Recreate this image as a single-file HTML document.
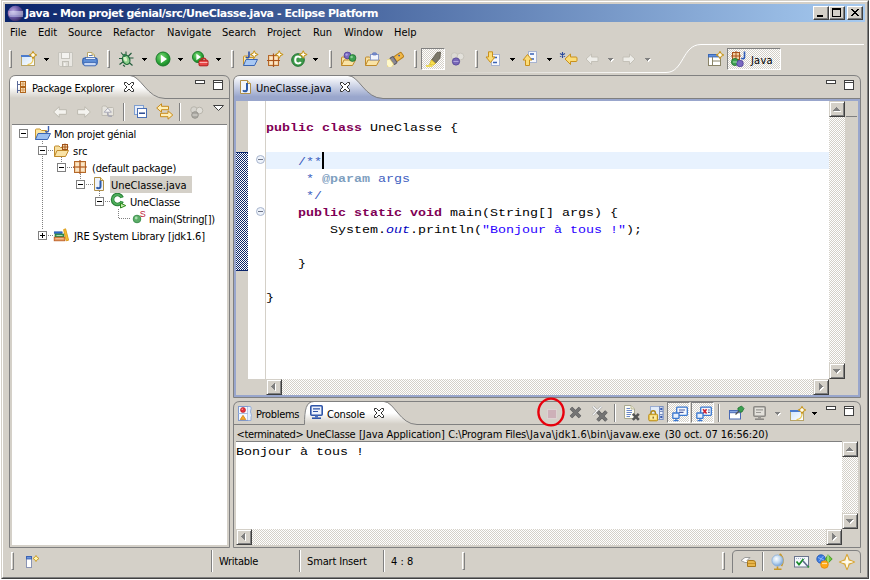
<!DOCTYPE html>
<html><head><meta charset="utf-8"><title>Java - Mon projet génial/src/UneClasse.java - Eclipse Platform</title>
<style>
*{box-sizing:border-box;margin:0;padding:0}
html,body{width:870px;height:580px;overflow:hidden;background:#fff}
body{position:relative;font-family:"DejaVu Sans Condensed","Liberation Sans",sans-serif;font-size:11px;color:#000}
div,span,i,svg,b{position:absolute;display:block}
b{font-weight:normal}
.t{white-space:nowrap;line-height:14px;height:14px}
#win{left:1px;top:0;width:868px;height:579px;background:#d4d0c8;border:1px solid;border-color:#d4d0c8 #404040 #404040 #d4d0c8}
#win2{left:2px;top:1px;width:866px;height:577px;border:1px solid;border-color:#fff #808080 #808080 #fff}
#title{left:5px;top:4px;width:860px;height:18px;background:linear-gradient(90deg,#0a246a 0%,#a6caf0 100%)}
#title .tt{left:20px;top:2px;color:#fff;font-weight:bold;font-size:11px;line-height:16px;white-space:nowrap;font-family:"DejaVu Sans","Liberation Sans",sans-serif;letter-spacing:-0.46px}
.cb{top:2px;width:16px;height:14px;background:#d4d0c8;border:1px solid;border-color:#fff #404040 #404040 #fff;box-shadow:inset -1px -1px 0 #808080}
.mono{font-family:"Liberation Mono",monospace;font-size:11px;transform:scaleX(1.2119);transform-origin:0 0;white-space:pre;line-height:17px;height:17px}
.kw{color:#7f0055;font-weight:bold;position:static;display:inline}
.cm{color:#3f5fbf}
.tag{color:#7f9fbf;font-weight:bold;position:static;display:inline}
.str{color:#2a00ff;position:static;display:inline}
.fld{color:#0000c0;font-style:italic;position:static;display:inline}
.sbtn{width:16px;height:16px;background:#d4d0c8;border:1px solid;border-color:#d4d0c8 #404040 #404040 #d4d0c8;box-shadow:inset 1px 1px 0 #fff,inset -1px -1px 0 #808080}
.track{background-color:#fff;background-image:conic-gradient(#d4d0c8 25%,#fff 0 50%,#d4d0c8 0 75%,#fff 0);background-size:2px 2px}
.chk{background-color:#fff;background-image:conic-gradient(#d4d0c8 25%,#fff 0 50%,#d4d0c8 0 75%,#fff 0);background-size:2px 2px;border:1px solid;border-color:#808080 #fff #fff #808080}
.sep{width:2px;border-left:1px solid #808080;border-right:1px solid #fff}
.grip{width:3px;border:1px solid;border-color:#fff #808080 #808080 #fff}
.vsep{width:1px;background:#808080}
.dd{width:0;height:0;border:3px solid transparent;border-top-color:#000;border-bottom:0;border-left-width:3px;border-right-width:3px}
</style></head><body>
<div id="win"></div><div id="win2"></div>
<div id="title">
<svg style="left:2px;top:1px" width="17" height="17" viewBox="-0.5 -0.5 17 17"><defs><radialGradient id="eg" cx="35%" cy="35%" r="75%"><stop offset="0" stop-color="#b9a9e0"/><stop offset="0.5" stop-color="#6a5aa8"/><stop offset="1" stop-color="#2c2255"/></radialGradient></defs><circle cx="8" cy="8" r="7.8" fill="url(#eg)"/><path d="M1.5 5.5Q1 8 1.8 10.6" stroke="#e8a0c8" stroke-width="1" fill="none" opacity=".7"/><rect x="2" y="6" width="13.5" height="1" fill="#e8eefc"/><rect x="1.6" y="8" width="14" height="1" fill="#e8eefc"/><rect x="2" y="10" width="13.5" height="1" fill="#c8cdf0"/></svg>
<span class="tt">Java - Mon projet génial/src/UneClasse.java - Eclipse Platform</span>
<div class="cb" style="left:808px"><i style="left:3px;top:8px;width:6px;height:2px;background:#000"></i></div>
<div class="cb" style="left:824px"><i style="left:2px;top:1px;width:9px;height:9px;border:1px solid #000;border-top-width:2px"></i></div>
<div class="cb" style="left:842px"><svg style="left:3px;top:2px" width="8" height="7" viewBox="0 0 8 7"><path d="M0 0L7 7M1 0L8 7M7 0L0 7M8 0L1 7" stroke="#000" stroke-width="1" shape-rendering="crispEdges"/></svg></div>
</div>
<span class="t" style="left:10px;top:26px">File</span><span class="t" style="left:38px;top:26px">Edit</span><span class="t" style="left:68px;top:26px">Source</span><span class="t" style="left:113px;top:26px">Refactor</span><span class="t" style="left:167px;top:26px">Navigate</span><span class="t" style="left:222px;top:26px">Search</span><span class="t" style="left:267px;top:26px">Project</span><span class="t" style="left:313px;top:26px">Run</span><span class="t" style="left:344px;top:26px">Window</span><span class="t" style="left:394px;top:26px">Help</span>
<!-- Main toolbar -->
<svg style="left:0;top:40px" width="870" height="36" viewBox="0 40 870 36" fill="none"><defs><linearGradient id="cl" x1="0" y1="0" x2="1" y2="0"><stop offset="0" stop-color="#fff" stop-opacity="0"/><stop offset="1" stop-color="#fff"/></linearGradient></defs><rect x="440" y="72" width="226" height="1" fill="url(#cl)"/><path d="M666 72.5C684 72.5 682 44.5 701 44.5H864" stroke="#fff"/></svg><div class="grip" style="left:9px;top:50px;height:18px"></div><svg style="left:20px;top:50px" width="17" height="17" viewBox="0 0 17 17" ><defs><linearGradient id="nw20" x1="0" y1="0" x2="1" y2="1"><stop offset="0" stop-color="#cfe4fb"/><stop offset="1" stop-color="#fff"/></linearGradient></defs><rect x="1.5" y="5.5" width="13" height="10" fill="url(#nw20)" stroke="#b8a468"/><path d="M1 5.5H11M1 6.5H11" stroke="#4a7acc"/><path d="M13 8V9Q13 14 7.5 14.6" fill="none" stroke="#ecc850" stroke-width="1.2"/><path d="M13 1.4l1.2 2.4l2.4 1.2l-2.4 1.2l-1.2 2.4l-1.2-2.4l-2.4-1.2l2.4-1.2z" fill="#fffbe0" stroke="#c8961e" stroke-width="1.1" stroke-linejoin="round"/><path d="M13 3v4M11 5h4" stroke="#fff" stroke-width=".8"/></svg><svg style="left:44px;top:58px" width="5" height="3" viewBox="0 0 5 3" shape-rendering="crispEdges"><path d="M0 0H5V1H0ZM1 1H4V2H1ZM2 2H3V3H2Z" fill="#000"/></svg><svg style="left:58px;top:52px" width="16" height="15" viewBox="0 0 16 15" ><path d="M0.5 0.5H14.5V14.5H2L0.5 13Z" fill="#e9e7e2" stroke="#c6c4bd"/><rect x="3.5" y="0.5" width="8" height="6" fill="#f4f3f0" stroke="#c6c4bd"/><rect x="4.5" y="9.5" width="6" height="5" fill="#dedcd6" stroke="#c0beb6"/><rect x="6" y="11" width="1.5" height="3" fill="#f4f3f0"/></svg><svg style="left:82px;top:51px" width="16" height="16" viewBox="0 0 16 16" ><path d="M5.5 8V1.5H10L12.5 4V8" fill="#fdfdf6" stroke="#b8a468"/><path d="M10 1.5V4H12.5" fill="#f0e0a8" stroke="#b8a468" stroke-width=".8"/><path d="M7 4.5H10.5M7 6.5H11" stroke="#5a76b0"/><rect x="0.8" y="7.2" width="14.4" height="6.6" rx="1.8" fill="#5f8fd8" stroke="#2f5fb0" stroke-width="1.2"/><rect x="3.5" y="6.4" width="10" height="2" fill="#e4ecf8" stroke="#3a64b0" stroke-width=".7"/><rect x="1.8" y="11.4" width="12.4" height="3.4" rx="1.2" fill="#c8d8f4" stroke="#3a64b0" stroke-width=".9"/></svg><div class="grip" style="left:107px;top:50px;height:18px"></div><svg style="left:118px;top:51px" width="17" height="17" viewBox="0 0 17 17" ><path d="M3 1.5L6 5M13.5 2L10 5.5M1 7.5H5M11 7H15.5M1.5 13.5L5.5 10.5M10.5 11L14.5 14.5M8 0.5V4M5 14L7 15.5" stroke="#1f5a3a" stroke-width="1.1" fill="none"/><ellipse cx="8.2" cy="8.8" rx="3.6" ry="4.8" transform="rotate(-20 8.2 8.8)" fill="#8ccf8a" stroke="#1f6a3a" stroke-width="1.2"/><ellipse cx="7.4" cy="8" rx="1.6" ry="2.6" transform="rotate(-20 7.4 8)" fill="#d8f0c8"/><circle cx="6.4" cy="4.4" r="1.6" fill="#2f7a4a"/></svg><svg style="left:142px;top:58px" width="5" height="3" viewBox="0 0 5 3" shape-rendering="crispEdges"><path d="M0 0H5V1H0ZM1 1H4V2H1ZM2 2H3V3H2Z" fill="#000"/></svg><svg style="left:155px;top:51px" width="16" height="16" viewBox="0 0 16 16" ><defs><radialGradient id="rga" cx="40%" cy="35%" r="70%"><stop offset="0" stop-color="#7fd878"/><stop offset=".6" stop-color="#2fa83a"/><stop offset="1" stop-color="#158024"/></radialGradient></defs><circle cx="8" cy="8" r="7" fill="url(#rga)" stroke="#1a7a2a" stroke-width="1"/><path d="M5.8 3.8V12.2L12 8Z" fill="#fff"/></svg><svg style="left:178px;top:58px" width="5" height="3" viewBox="0 0 5 3" shape-rendering="crispEdges"><path d="M0 0H5V1H0ZM1 1H4V2H1ZM2 2H3V3H2Z" fill="#000"/></svg><svg style="left:192px;top:51px" width="17" height="16" viewBox="0 0 17 16" ><defs><radialGradient id="rgb" cx="40%" cy="35%" r="70%"><stop offset="0" stop-color="#7fd878"/><stop offset=".6" stop-color="#2fa83a"/><stop offset="1" stop-color="#158024"/></radialGradient></defs><circle cx="6" cy="6" r="5.5" fill="url(#rgb)" stroke="#1a7a2a" stroke-width="1"/><path d="M4.4 2.8V9.2L9 6Z" fill="#fff"/><path d="M9 9.5Q9 7.2 11.5 7.2Q14 7.2 14 9.5" fill="none" stroke="#c82828" stroke-width="1.2"/><rect x="7" y="9.2" width="9" height="5.6" rx="1" fill="#e84848" stroke="#b01818"/><path d="M7.5 11.5H15.5" stroke="#f8b0b0"/></svg><svg style="left:216px;top:58px" width="5" height="3" viewBox="0 0 5 3" shape-rendering="crispEdges"><path d="M0 0H5V1H0ZM1 1H4V2H1ZM2 2H3V3H2Z" fill="#000"/></svg><div class="grip" style="left:231px;top:50px;height:18px"></div><svg style="left:242px;top:50px" width="17" height="17" viewBox="0 0 17 17" ><path d="M1.5 15.5V7Q1.5 6 2.5 6H6L7.5 7.5H11.5V9" fill="#fbe6a2" stroke="#c9962e"/><path d="M1.5 15.5L4 9.5H15.5L12.5 15.5Z" fill="#a8c8f4" stroke="#3a66b4" stroke-linejoin="round"/><path d="M7 1.5V6Q7 7.8 5.4 7.8Q4.4 7.8 4 6.8" fill="none" stroke="#2c50a8" stroke-width="1.6"/><path d="M12.2 0.9l1.2 2.4l2.4 1.2l-2.4 1.2l-1.2 2.4l-1.2-2.4l-2.4-1.2l2.4-1.2z" fill="#fffbe0" stroke="#c8961e" stroke-width="1.1" stroke-linejoin="round"/><path d="M12.2 2.5v4M10.2 4.5h4" stroke="#fff" stroke-width=".8"/></svg><svg style="left:267px;top:50px" width="17" height="17" viewBox="0 0 17 17" ><rect x="1.5" y="5.5" width="10" height="10" fill="#f3cfa0" stroke="#b4682a"/><path d="M6.5 3.5V17M0 10.5H13" stroke="#a9531c" stroke-width="1.2"/><rect x="3" y="7" width="2.6" height="2.6" fill="#fae6c8"/><rect x="7.6" y="7" width="2.6" height="2.6" fill="#fae6c8"/><rect x="3" y="11.6" width="2.6" height="2.6" fill="#fae6c8"/><rect x="7.6" y="11.6" width="2.6" height="2.6" fill="#fae6c8"/><path d="M12.2 0.9l1.2 2.4l2.4 1.2l-2.4 1.2l-1.2 2.4l-1.2-2.4l-2.4-1.2l2.4-1.2z" fill="#fffbe0" stroke="#c8961e" stroke-width="1.1" stroke-linejoin="round"/><path d="M12.2 2.5v4M10.2 4.5h4" stroke="#fff" stroke-width=".8"/></svg><svg style="left:291px;top:50px" width="17" height="17" viewBox="0 0 17 17" ><circle cx="7" cy="10" r="6.3" fill="#3d9a4a" stroke="#1f7030"/><path d="M9.8 8Q9 6.6 7 6.6Q4.2 6.6 4.2 10Q4.2 13.4 7 13.4Q9 13.4 9.8 12" fill="none" stroke="#fff" stroke-width="2"/><path d="M12.2 0.9l1.2 2.4l2.4 1.2l-2.4 1.2l-1.2 2.4l-1.2-2.4l-2.4-1.2l2.4-1.2z" fill="#fffbe0" stroke="#c8961e" stroke-width="1.1" stroke-linejoin="round"/><path d="M12.2 2.5v4M10.2 4.5h4" stroke="#fff" stroke-width=".8"/></svg><svg style="left:313px;top:58px" width="5" height="3" viewBox="0 0 5 3" shape-rendering="crispEdges"><path d="M0 0H5V1H0ZM1 1H4V2H1ZM2 2H3V3H2Z" fill="#000"/></svg><div class="grip" style="left:329px;top:50px;height:18px"></div><svg style="left:340px;top:51px" width="18" height="16" viewBox="0 0 18 16" ><path d="M1.5 14.5V7Q1.5 6 2.5 6H5.5L7 7.5H11.5V9" fill="#f6dfa0" stroke="#c08a2a"/><path d="M1.5 14.5L4 9H15.5L12.5 14.5Z" fill="#f9e3a6" stroke="#c08a2a" stroke-linejoin="round"/><circle cx="7.5" cy="4.5" r="3.4" fill="#7a6ac0" stroke="#4a3a98" stroke-width=".8"/><circle cx="12.5" cy="7" r="3.4" fill="#3da050" stroke="#1f7030" stroke-width=".8"/><circle cx="6.6" cy="3.6" r="1.2" fill="#b0a4e0"/><circle cx="11.6" cy="6" r="1.2" fill="#8cd098"/></svg><svg style="left:364px;top:51px" width="18" height="16" viewBox="0 0 18 16" ><path d="M1.5 14.5V7Q1.5 6 2.5 6H5.5L7 7.5H11.5V9" fill="#f6dfa0" stroke="#c08a2a"/><path d="M1.5 14.5L4 9H15.5L12.5 14.5Z" fill="#f9e3a6" stroke="#c08a2a" stroke-linejoin="round"/><rect x="6.5" y="3.5" width="8" height="5.5" fill="#f4f6fc" stroke="#8a9ac8"/><rect x="8.5" y="1.8" width="4" height="2.2" rx="1" fill="#7a90d0" stroke="#5a70b8" stroke-width=".7"/></svg><svg style="left:387px;top:51px" width="19" height="16" viewBox="0 0 19 16" ><g transform="rotate(-35 9 8)"><rect x="7" y="5" width="10" height="5.6" rx="1.2" fill="#f0b848" stroke="#b8801c"/><circle cx="13.5" cy="7" r=".9" fill="#3a5aa8"/><rect x="4" y="4" width="4" height="7.6" rx="1" fill="#8a8894" stroke="#5a5864"/><path d="M4 4.5L-2 2.5V13L4 11Z" fill="#fff8c8" stroke="#e8d070" stroke-width=".7"/></g></svg><div class="grip" style="left:414px;top:50px;height:18px"></div><div class="chk" style="left:421px;top:48px;width:24px;height:22px"></div><svg style="left:425px;top:51px" width="17" height="16" viewBox="0 0 17 16" ><path d="M6.5 9L12 1.5L15.5 1L15 7L10.5 12.5Z" fill="#7a7668" stroke="#5a5648" stroke-width=".8"/><path d="M6.5 9L10.5 12.5L8.5 14L4.5 13.5Z" fill="#f8e050" stroke="#d8b820" stroke-width=".8"/><path d="M1 15H7.5" stroke="#f0d838" stroke-width="1.6"/></svg><svg style="left:450px;top:51px" width="15" height="15" viewBox="0 0 15 15" ><circle cx="4.5" cy="5" r="3.4" fill="#dcdad4" stroke="#c8c5bc"/><circle cx="10.5" cy="5.5" r="3.4" fill="#e2e0da" stroke="#c8c5bc"/><circle cx="6" cy="10.5" r="3.6" fill="#7868b8" stroke="#5a4a9c"/><rect x="3.5" y="10" width="5" height="1" fill="#b0a4dc"/></svg><div class="grip" style="left:475px;top:50px;height:18px"></div><svg style="left:485px;top:51px" width="16" height="16" viewBox="0 0 16 16" ><rect x="6.5" y="3.5" width="8" height="11" fill="#f6f8fd" stroke="#a8b4d0"/><path d="M8 6.5h4M8 11.5h4" stroke="#3a62b4" stroke-width="1.4"/><path d="M3.5 0.8H7.5V6H10L5.5 11.5L1 6H3.5Z" fill="#fbdc78" stroke="#c8901c" stroke-linejoin="round"/></svg><svg style="left:510px;top:58px" width="5" height="3" viewBox="0 0 5 3" shape-rendering="crispEdges"><path d="M0 0H5V1H0ZM1 1H4V2H1ZM2 2H3V3H2Z" fill="#000"/></svg><svg style="left:522px;top:50px" width="16" height="17" viewBox="0 0 16 17" ><rect x="6.5" y="1.5" width="8" height="11" fill="#f6f8fd" stroke="#a8b4d0"/><path d="M8 4h4M8 9h4" stroke="#3a62b4" stroke-width="1.4"/><path d="M3.5 15.5H7.5V10H10L5.5 4.5L1 10H3.5Z" fill="#fbdc78" stroke="#c8901c" stroke-linejoin="round"/></svg><svg style="left:547px;top:58px" width="5" height="3" viewBox="0 0 5 3" shape-rendering="crispEdges"><path d="M0 0H5V1H0ZM1 1H4V2H1ZM2 2H3V3H2Z" fill="#000"/></svg><svg style="left:559px;top:51px" width="19" height="16" viewBox="0 0 19 16" ><path d="M6 8L11.5 3V6H17Q18 6 18 7V9.5Q18 10.5 17 10.5H11.5V13.5Z" fill="#fbdc78" stroke="#c8901c" stroke-linejoin="round"/><path d="M3.5 1V7M1 2.5L6 5.5M6 2.5L1 5.5" stroke="#2a4a9c" stroke-width="1.1"/></svg><svg style="left:585px;top:53px" width="14" height="13" viewBox="0 0 14 13" ><path d="M1 6L6.5 1V4H13V8.5H6.5V11.5Z" fill="#eeede9" stroke="#c4c1b8" stroke-linejoin="round"/></svg><svg style="left:608px;top:58px" width="6" height="4" viewBox="0 0 6 4" shape-rendering="crispEdges"><path d="M1 1H6V2H1ZM2 2H5V3H2ZM3 3H4V4H3Z" fill="#fff"/><path d="M0 0H5V1H0ZM1 1H4V2H1ZM2 2H3V3H2Z" fill="#808080"/></svg><svg style="left:622px;top:53px" width="14" height="13" viewBox="0 0 14 13" ><path d="M1 6L6.5 1V4H13V8.5H6.5V11.5Z" fill="#eeede9" stroke="#c4c1b8" stroke-linejoin="round" transform="translate(14 0) scale(-1 1)"/></svg><svg style="left:645px;top:58px" width="6" height="4" viewBox="0 0 6 4" shape-rendering="crispEdges"><path d="M1 1H6V2H1ZM2 2H5V3H2ZM3 3H4V4H3Z" fill="#fff"/><path d="M0 0H5V1H0ZM1 1H4V2H1ZM2 2H3V3H2Z" fill="#808080"/></svg><svg style="left:708px;top:51px" width="16" height="16" viewBox="0 0 16 16" ><rect x="0.5" y="3.5" width="12" height="11" fill="#fff" stroke="#8a8468"/><rect x="0.5" y="3.5" width="12" height="2.4" fill="#5f8fdc" stroke="#3a68b8"/><path d="M4.5 6V14.5M4.5 10H12.5" stroke="#8a8468"/><path d="M12 0.4l1.2 2.4l2.4 1.2l-2.4 1.2l-1.2 2.4l-1.2-2.4l-2.4-1.2l2.4-1.2z" fill="#fffbe0" stroke="#c8961e" stroke-width="1.1" stroke-linejoin="round"/><path d="M12 2v4M10 4h4" stroke="#fff" stroke-width=".8"/></svg><div class="chk" style="left:727px;top:48px;width:54px;height:22px"></div><svg style="left:730px;top:51px" width="18" height="16" viewBox="0 0 18 16" ><rect x="2.5" y="1.5" width="7" height="7" fill="#f3cfa0" stroke="#a9531c"/><path d="M6 0V10M1 5H11" stroke="#a9531c"/><path d="M14.5 0.5V6Q14.5 7.8 12.9 7.8Q11.9 7.8 11.5 6.8" fill="none" stroke="#2c5ab8" stroke-width="1.6"/><circle cx="5" cy="11" r="3.6" fill="#3da050" stroke="#1f7030" stroke-width=".8"/><circle cx="10" cy="12.5" r="3.3" fill="#7a6ac0" stroke="#4a3a98" stroke-width=".8"/><rect x="3" y="10.5" width="4" height="1" fill="#a8e0b0"/></svg><span class="t" style="left:751px;top:54px;letter-spacing:0.2px">Java</span>
<!-- Package Explorer -->
<svg style="left:0;top:0" width="870" height="580" viewBox="0 0 870 580" fill="none"><path d="M9.5 547.5V82Q9.5 75.5 16 75.5H223Q229.5 75.5 229.5 82V547.5Z" stroke="#808080" fill="#d4d0c8"/><defs><linearGradient id="wg" x1="0" y1="0" x2="0" y2="1"><stop offset="0" stop-color="#fff"/><stop offset="0.5" stop-color="#fff"/><stop offset="1" stop-color="#d4d0c8"/></linearGradient></defs><path d="M10 98V82Q10 76 16 76H130C141 76 147 98 165 98Z" fill="url(#wg)"/><path d="M130 75.5C141 75.5 147 98.5 165 98.5H229" stroke="#808080"/><defs><linearGradient id="tg" x1="0" y1="0" x2="0" y2="1"><stop offset="0" stop-color="#fff"/><stop offset="0.9" stop-color="#99a6cc"/><stop offset="1" stop-color="#99a6cc"/></linearGradient></defs><path d="M233.5 397.5V82Q233.5 75.5 240 75.5H854Q860.5 75.5 860.5 82V397.5Z" stroke="#808080" fill="#d4d0c8"/><path d="M234 99V82Q234 76 240 76H348C359 76 365 98 383 98H860V99Z" fill="url(#tg)"/><path d="M383 98H860V99H383Z" fill="#d4d0c8"/><path d="M348 75.5C359 75.5 365 98.5 383 98.5H860" stroke="#808080"/><rect x="235" y="100" width="624" height="296" stroke="#99a6cc" stroke-width="2"/><path d="M233.5 547.5V408Q233.5 401.5 240 401.5H854Q860.5 401.5 860.5 408V547.5Z" stroke="#808080" fill="#d4d0c8"/><path d="M304 424C304 410 306 402 314 402H384C394 402 400 424 417 424Z" fill="url(#wg)"/><path d="M234 424.5H304.5C304.5 410 306 401.5 314 401.5M384 401.5C394 401.5 400 424.5 417 424.5H860" stroke="#808080"/></svg>
<svg style="left:15px;top:81px" width="12" height="13" viewBox="0 0 12 13" ><path d="M2.5 0V12M2.5 3.5H5M2.5 9.5H5" stroke="#5a6a9a" fill="none"/><rect x="5.5" y="0.5" width="5" height="5" fill="#f8e4c0" stroke="#b0651c"/><path d="M8 1v4M6 3h4" stroke="#d89a58"/><rect x="5.5" y="6.5" width="5" height="5" fill="#f8e4c0" stroke="#b0651c"/><path d="M8 7v4M6 9h4" stroke="#d89a58"/></svg><span class="t" style="left:32px;top:82px;letter-spacing:-0.2px">Package Explorer</span><svg style="left:124px;top:82px" width="10" height="10" viewBox="0 0 10 10" ><path d="M0.5 0.5H2.5L5 3L7.5 0.5H9.5V2.5L7 5L9.5 7.5V9.5H7.5L5 7L2.5 9.5H0.5V7.5L3 5L0.5 2.5Z" fill="#fff" stroke="#303030" stroke-width="1" stroke-linejoin="miter"/></svg><div style="left:195px;top:80px;width:10px;height:4px;background:#fff;border:1px solid #404040"></div><div style="left:213px;top:80px;width:10px;height:10px;background:#fff;border:1px solid #404040"><i style="left:0;top:1px;width:8px;height:1px;background:#404040"></i></div><svg style="left:53px;top:106px" width="14" height="12" viewBox="0 0 14 12" ><path d="M0.6 6L6.2 0.7V3.7H13.4V8.3H6.2V11.3Z" fill="#f4f3ef" stroke="#bdbab0" stroke-linejoin="round"/></svg><svg style="left:77px;top:106px" width="14" height="12" viewBox="0 0 14 12" ><path d="M0.6 6L6.2 0.7V3.7H13.4V8.3H6.2V11.3Z" fill="#f4f3ef" stroke="#bdbab0" stroke-linejoin="round" transform="translate(14 0) scale(-1 1)"/></svg><svg style="left:101px;top:104px" width="14" height="14" viewBox="0 0 14 14" ><path d="M1 3.5Q1 2 2.5 2H5L6 3.5H11.5Q12.5 3.5 12.5 4.5V11.5H1Z" fill="#e6e4de" stroke="#bebbb2"/><path d="M6.8 7V10Q6.8 12.2 9 12.2H11" fill="none" stroke="#a8a8b4" stroke-width="1.6"/><path d="M6.8 4.2L10.4 8.2H3.2Z" fill="#f8f8f8" stroke="#a8a8b4" stroke-linejoin="round"/></svg><div class="sep" style="left:123px;top:103px;height:18px"></div><svg style="left:134px;top:105px" width="14" height="13" viewBox="0 0 14 13" ><rect x="0.5" y="0.5" width="9" height="9" fill="#e8eef8" stroke="#7f9fd0"/><rect x="3.5" y="3.5" width="9" height="9" fill="#fff" stroke="#4a6fb5"/><rect x="5" y="7.5" width="6" height="1.4" fill="#1c3f8c"/></svg><svg style="left:156px;top:103px" width="18" height="17" viewBox="0 0 18 17" ><path d="M0.7 5L5.5 0.8V3.3H12.5V6.7H5.5V9.2Z" fill="#fdeeb8" stroke="#c88a18" stroke-linejoin="round"/><path d="M16.8 12L12 7.8V10.3H4.5V13.7H12V16.2Z" fill="#fdeeb8" stroke="#c88a18" stroke-linejoin="round"/></svg><div class="sep" style="left:179px;top:103px;height:18px"></div><svg style="left:189px;top:105px" width="15" height="14" viewBox="0 0 15 14" ><circle cx="5" cy="5" r="3.3" fill="#d6d4ce" stroke="#b8b5ac"/><circle cx="10.5" cy="5.5" r="3.3" fill="#e0ded8" stroke="#b8b5ac"/><circle cx="6" cy="10" r="3.3" fill="#aaa8a2" stroke="#98968f"/><rect x="3.5" y="9.5" width="5" height="1" fill="#dcdad4"/></svg><svg style="left:213px;top:105px" width="11" height="6" viewBox="0 0 11 6" ><path d="M0.5 0.5H10.5L5.5 5.5Z" fill="#fff" stroke="#404040"/></svg><div style="left:12px;top:124px;width:215px;height:421px;background:#fff;border-top:1px solid #808080"></div><svg style="left:0;top:0" width="240" height="260" viewBox="0 0 240 260" fill="none" shape-rendering="crispEdges"><path d="M42.5 139V145M42.5 156V230" stroke="#808080" stroke-dasharray="1 1"/><path d="M23.5 146V235M" stroke="#808080" stroke-dasharray="1 1" opacity="0"/><path d="M48 150.5H54M61.5 157V162M67 167.5H74M80.5 174V179M86 184.5H93M99.5 191V196M105 201.5H111M118.5 209V218M119 218.5H130M48 235.5H53" stroke="#808080" stroke-dasharray="1 1"/></svg><div style="left:19px;top:129px;width:9px;height:9px;border:1px solid #808080;background:#fff"><i style="left:1px;top:3px;width:5px;height:1px;background:#000"></i></div><div style="left:38px;top:146px;width:9px;height:9px;border:1px solid #808080;background:#fff"><i style="left:1px;top:3px;width:5px;height:1px;background:#000"></i></div><div style="left:57px;top:163px;width:9px;height:9px;border:1px solid #808080;background:#fff"><i style="left:1px;top:3px;width:5px;height:1px;background:#000"></i></div><div style="left:76px;top:180px;width:9px;height:9px;border:1px solid #808080;background:#fff"><i style="left:1px;top:3px;width:5px;height:1px;background:#000"></i></div><div style="left:95px;top:197px;width:9px;height:9px;border:1px solid #808080;background:#fff"><i style="left:1px;top:3px;width:5px;height:1px;background:#000"></i></div><div style="left:38px;top:231px;width:9px;height:9px;border:1px solid #808080;background:#fff"><i style="left:1px;top:3px;width:5px;height:1px;background:#000"></i><i style="left:3px;top:1px;width:1px;height:5px;background:#000"></i></div><div style="left:110px;top:176px;width:82px;height:17px;background:#d4d0c8"></div><svg style="left:34px;top:126px" width="18" height="15" viewBox="0 0 18 15" ><path d="M1.5 13.5V4Q1.5 3 2.5 3H6L7.5 4.5H12.5V7" fill="#fbe6a2" stroke="#c9962e"/><path d="M1.5 13.5L4 7.5H16.5L13.5 13.5Z" fill="#9dc0f0" stroke="#3a66b4" stroke-linejoin="round"/><path d="M14.5 0V4.5Q14.5 6 12.8 6Q11.8 6 11.5 5" fill="none" stroke="#3f62b0" stroke-width="1.4"/></svg><span class="t" style="left:54px;top:128px;letter-spacing:-0.25px">Mon projet génial</span><svg style="left:53px;top:143px" width="17" height="15" viewBox="0 0 17 15" ><path d="M1.5 13.5V4Q1.5 3 2.5 3H6L7.5 4.5H11.5V7" fill="#f6dfa0" stroke="#c08a2a"/><path d="M1.5 13.5L4 7.5H15.5L12.5 13.5Z" fill="#f9e3a6" stroke="#c08a2a" stroke-linejoin="round"/><rect x="9.5" y="1.5" width="5" height="5" fill="#f6d7a8" stroke="#a0521a"/><path d="M12 0.5v7M8.5 4h7" stroke="#a0521a" stroke-width=".9"/></svg><span class="t" style="left:73px;top:145px">src</span><svg style="left:73px;top:159px" width="15" height="15" viewBox="0 0 15 15" ><rect x="1.5" y="2.5" width="11" height="11" fill="#f3cfa0" stroke="#b4682a"/><path d="M7 1V15M0 8H14" stroke="#a9531c" stroke-width="1.2"/><rect x="3" y="4" width="3" height="3" fill="#fae6c8"/><rect x="8" y="4" width="3" height="3" fill="#fae6c8"/><rect x="3" y="9" width="3" height="3" fill="#fae6c8"/><rect x="8" y="9" width="3" height="3" fill="#fae6c8"/></svg><span class="t" style="left:92px;top:162px;letter-spacing:-0.2px">(default package)</span><svg style="left:92px;top:176px" width="14" height="16" viewBox="0 0 14 16" ><path d="M2.5 1.5H8.5L11.5 4.5V14.5H2.5Z" fill="#eef4fc" stroke="#b0904a"/><path d="M8.5 1.5V4.5H11.5" fill="#f6e2a8" stroke="#b8923a"/><path d="M8.5 4.5V10.3Q8.5 12.3 6.5 12.3Q5.2 12.3 4.6 11.2" fill="none" stroke="#2c5aa8" stroke-width="2"/></svg><span class="t" style="left:111px;top:179px">UneClasse.java</span><svg style="left:110px;top:193px" width="17" height="16" viewBox="0 0 17 16" ><circle cx="7.5" cy="6.5" r="5" fill="#fff"/><path d="M12.14 4.63A5 5 0 1 0 12.14 8.37" fill="none" stroke="#2a8038" stroke-width="3.6"/><path d="M11.89 4.55A4.8 4.8 0 1 0 11.89 8.45" fill="none" stroke="#4fae5c" stroke-width="1.8"/><path d="M10.5 10.2L15.8 12.6L10.5 15Z" fill="#c4ecb0" stroke="#2d8a1c" stroke-width="1" stroke-linejoin="round"/></svg><span class="t" style="left:130px;top:196px;letter-spacing:-0.2px">UneClasse</span><svg style="left:132px;top:209px" width="14" height="15" viewBox="0 0 14 15" ><circle cx="5" cy="10" r="3.8" fill="#5cae68" stroke="#3f9050"/><circle cx="4.2" cy="9" r="1.4" fill="#a8dcae"/><text x="7.8" y="7.6" font-family="Liberation Sans,sans-serif" font-size="9" fill="#c0203a">S</text></svg><span class="t" style="left:149px;top:213px;letter-spacing:-0.27px">main(String[])</span><svg style="left:53px;top:227px" width="17" height="15" viewBox="0 0 17 15" ><rect x="1.2" y="4.8" width="8" height="1.8" fill="#2a6acc" stroke="#1a4a9c" stroke-width=".5"/><rect x="2" y="7" width="9" height="3" fill="#3a9a5a" stroke="#1f7038" stroke-width=".7"/><rect x="3.5" y="8" width="6" height="1" fill="#a8dcb4"/><rect x="1.2" y="10.2" width="10.6" height="3.6" fill="#e89458" stroke="#b85a20" stroke-width=".8"/><rect x="2.5" y="11.2" width="8" height="1" fill="#f4c8a0"/><path d="M10.6 2.6L12.6 1.8L15.6 13.2L13.2 13.8Z" fill="#f8c030" stroke="#d89818" stroke-width=".9" stroke-linejoin="round"/></svg><span class="t" style="left:74px;top:230px;letter-spacing:-0.16px">JRE System Library [jdk1.6]</span>
<!-- Editor -->
<svg style="left:240px;top:80px" width="12" height="15" viewBox="0 0 12 15" ><path d="M0.5 0.5H7.5L10.5 3.5V13.5H0.5Z" fill="#f2f6fc" stroke="#b0904a"/><path d="M7.5 0.5V3.5H10.5" fill="#f6e2a8" stroke="#b8923a"/><path d="M7 3V9.2Q7 11.3 5 11.3Q3.7 11.3 3.1 10.2" fill="none" stroke="#2c5aa8" stroke-width="2"/></svg><span class="t" style="left:256px;top:82px">UneClasse.java</span><svg style="left:340px;top:82px" width="10" height="10" viewBox="0 0 10 10" ><path d="M0.5 0.5H2.5L5 3L7.5 0.5H9.5V2.5L7 5L9.5 7.5V9.5H7.5L5 7L2.5 9.5H0.5V7.5L3 5L0.5 2.5Z" fill="#fff" stroke="#303030" stroke-width="1" stroke-linejoin="miter"/></svg><div style="left:826px;top:80px;width:10px;height:4px;background:#fff;border:1px solid #404040"></div><div style="left:844px;top:80px;width:10px;height:10px;background:#fff;border:1px solid #404040"><i style="left:0;top:1px;width:8px;height:1px;background:#404040"></i></div><div style="left:236px;top:101px;width:12px;height:294px;background:#d4d0c8"></div><div style="left:248px;top:101px;width:581px;height:278px;background:#fff"></div><div style="left:265px;top:101px;width:1px;height:278px;background:#d4d0c8"></div><div style="left:248px;top:379px;width:18px;height:16px;background:#d4d0c8"></div><div style="left:236px;top:152px;width:12px;height:119px;background-color:#fff;background-image:conic-gradient(#0a246a 25%,#fff 0 50%,#0a246a 0 75%,#fff 0);background-size:2px 2px;border-top:1px solid #0a246a;border-bottom:1px solid #0a246a"></div><div style="left:266px;top:152px;width:563px;height:17px;background:#e8f2fe"></div><svg style="left:256px;top:155px" width="9" height="9" viewBox="0 0 9 9"><circle cx="4.5" cy="4.5" r="4" fill="#eef3fb" stroke="#a9b4cc"/><rect x="2" y="4" width="5" height="1" fill="#6d7487"/></svg><svg style="left:256px;top:207px" width="9" height="9" viewBox="0 0 9 9"><circle cx="4.5" cy="4.5" r="4" fill="#eef3fb" stroke="#a9b4cc"/><rect x="2" y="4" width="5" height="1" fill="#6d7487"/></svg><div class="mono" style="left:266px;top:120px"><b class="kw">public</b> <b class="kw">class</b> UneClasse {</div><div class="mono" style="left:266px;top:154px"><b class="cm" style="position:static;display:inline">    /**</b></div><div class="mono" style="left:266px;top:171px"><b class="cm" style="position:static;display:inline">     * <b class="tag">@param</b> args</b></div><div class="mono" style="left:266px;top:188px"><b class="cm" style="position:static;display:inline">     */</b></div><div class="mono" style="left:266px;top:205px">    <b class="kw">public</b> <b class="kw">static</b> <b class="kw">void</b> main(String[] args) {</div><div class="mono" style="left:266px;top:222px">        System.<b class="fld">out</b>.println(<b class="str">"Bonjour à tous !"</b>);</div><div class="mono" style="left:266px;top:256px">    }</div><div class="mono" style="left:266px;top:290px">}</div><div style="left:322px;top:152px;width:2px;height:17px;background:#000"></div><div class="track" style="left:829px;top:117px;width:16px;height:246px"></div><div class="sbtn" style="left:829px;top:101px"><svg style="left:-1px;top:-1px" width="16" height="16" viewBox="0 0 16 16" shape-rendering="crispEdges"><path d="M8 7h1v1h-1ZM7 8h3v1h-3ZM6 9h5v1h-5ZM5 10h7v1h-7Z" fill="#fff"/><path d="M7 6h1v1h-1ZM6 7h3v1h-3ZM5 8h5v1h-5ZM4 9h7v1h-7Z" fill="#808080"/></svg></div><div class="sbtn" style="left:829px;top:363px"><svg style="left:-1px;top:-1px" width="16" height="16" viewBox="0 0 16 16" shape-rendering="crispEdges"><path d="M5 7h7v1h-7ZM6 8h5v1h-5ZM7 9h3v1h-3ZM8 10h1v1h-1Z" fill="#fff"/><path d="M4 6h7v1h-7ZM5 7h5v1h-5ZM6 8h3v1h-3ZM7 9h1v1h-1Z" fill="#808080"/></svg></div><div class="track" style="left:282px;top:379px;width:531px;height:16px"></div><div class="sbtn" style="left:266px;top:379px"><svg style="left:-1px;top:-1px" width="16" height="16" viewBox="0 0 16 16" shape-rendering="crispEdges"><path d="M6 8h1v1h-1ZM7 7h1v3h-1ZM8 6h1v5h-1ZM9 5h1v7h-1Z" fill="#fff"/><path d="M5 7h1v1h-1ZM6 6h1v3h-1ZM7 5h1v5h-1ZM8 4h1v7h-1Z" fill="#808080"/></svg></div><div class="sbtn" style="left:813px;top:379px"><svg style="left:-1px;top:-1px" width="16" height="16" viewBox="0 0 16 16" shape-rendering="crispEdges"><path d="M7 5h1v7h-1ZM8 6h1v5h-1ZM9 7h1v3h-1ZM10 8h1v1h-1Z" fill="#fff"/><path d="M6 4h1v7h-1ZM7 5h1v5h-1ZM8 6h1v3h-1ZM9 7h1v1h-1Z" fill="#808080"/></svg></div><div style="left:829px;top:379px;width:16px;height:16px;background:#d4d0c8"></div><div style="left:845px;top:101px;width:13px;height:294px;background:#d4d0c8"></div><div style="left:846px;top:116px;width:11px;height:1px;background:#808080"></div>
<!-- Console -->
<svg style="left:238px;top:406px" width="15" height="16" viewBox="0 0 15 16" ><rect x="0.5" y="0.5" width="9.5" height="14" fill="#f6f9fe" stroke="#7f9ad0"/><path d="M0.5 7.5H10" stroke="#a8bce0"/><path d="M10 0.5H12.5Q13.8 2 12.8 4Q12 6 13 7.5Q14 9.5 13 11.5V14.5H10" fill="#e6effb" stroke="#8fa8d8" stroke-width=".9"/><circle cx="5" cy="4" r="2.5" fill="#e8323c" stroke="#b01820" stroke-width=".6"/><circle cx="4.3" cy="3.3" r=".8" fill="#f8a0a0"/><path d="M5 9.3L7.8 13.6H2.2Z" fill="#f8a828" stroke="#c87808" stroke-width=".7" stroke-linejoin="round"/></svg><span class="t" style="left:256px;top:408px;letter-spacing:-0.3px">Problems</span><svg style="left:310px;top:405px" width="14" height="15" viewBox="0 0 14 15" ><rect x="0.8" y="0.8" width="11.4" height="9.4" rx="1" fill="#eef2fc" stroke="#2f55a8" stroke-width="1.6"/><path d="M3 3.8H10M3 6.5H8" stroke="#2f55a8" stroke-width="1.2"/><path d="M5 10.5H8V12.5H5Z" fill="#4a70c0"/><path d="M2 13.2H11" stroke="#2f55a8" stroke-width="1.6"/></svg><span class="t" style="left:327px;top:408px;letter-spacing:-0.2px">Console</span><svg style="left:374px;top:408px" width="10" height="10" viewBox="0 0 10 10" ><path d="M0.5 0.5H2.5L5 3L7.5 0.5H9.5V2.5L7 5L9.5 7.5V9.5H7.5L5 7L2.5 9.5H0.5V7.5L3 5L0.5 2.5Z" fill="#fff" stroke="#303030" stroke-width="1" stroke-linejoin="miter"/></svg><svg style="left:536px;top:396px" width="30" height="32" viewBox="0 0 30 32" ><ellipse cx="15" cy="16" rx="12.6" ry="13.4" fill="none" stroke="#e8000c" stroke-width="2.4"/></svg><div style="left:547px;top:409px;width:10px;height:10px;background:#cdb0b8;border:1px solid #ddd2d2"></div><svg style="left:569px;top:406px" width="13" height="14" viewBox="0 0 13 14" ><path d="M2 2L11 11M11 2L2 11" stroke="#5c5c5c" stroke-width="3.6" fill="none"/><path d="M2 2L11 11M11 2L2 11" stroke="#747474" stroke-width="2.6" fill="none"/></svg><svg style="left:591px;top:404px" width="18" height="18" viewBox="0 0 18 18" ><g transform="translate(0 0.5)"><path d="M2 2L10.5 10.5M10.5 2L2 10.5" stroke="#9a9a9a" stroke-width="2.4" fill="none"/><path d="M2 2L10.5 10.5M10.5 2L2 10.5" stroke="#f6f6f6" stroke-width="1.4" fill="none"/></g><g transform="translate(5 6)"><path d="M1.6 1.6L10.4 10.4M10.4 1.6L1.6 10.4" stroke="#5c5c5c" stroke-width="3.6" fill="none"/><path d="M1.6 1.6L10.4 10.4M10.4 1.6L1.6 10.4" stroke="#747474" stroke-width="2.6" fill="none"/></g></svg><div class="sep" style="left:614px;top:404px;height:18px"></div><svg style="left:624px;top:405px" width="16" height="16" viewBox="0 0 16 16" ><path d="M0.5 0.5H7L10.5 4V13.5H0.5Z" fill="#fdfdf6" stroke="#a8a890"/><path d="M7 0.5V4H10.5" fill="#ece8c8" stroke="#a8a890" stroke-width=".8"/><path d="M2.5 3.5H6M2.5 5.5H8M2.5 7.5H8M2.5 9.5H7M2.5 11.5H6" stroke="#6a86c8"/><path d="M8.8 8.8L14.8 14.8M14.8 8.8L8.8 14.8" stroke="#555" stroke-width="2.6"/></svg><svg style="left:648px;top:406px" width="16" height="16" viewBox="0 0 16 16" ><rect x="2.5" y="0.5" width="12.5" height="13" fill="#e2ecfa" stroke="#9aacd0"/><rect x="11.5" y="0.5" width="3.5" height="13" fill="#eef3fc" stroke="#7a90c0"/><rect x="12.2" y="1.8" width="2.2" height="2.4" fill="#3a5cb0"/><rect x="12.2" y="9.8" width="2.2" height="2.4" fill="#3a5cb0"/><path d="M11.5 5.5H15M11.5 8.5H15" stroke="#7a90c0"/><path d="M3 8.5V7Q3 4.8 5.2 4.8Q7.4 4.8 7.4 7V8.5" fill="none" stroke="#b08818" stroke-width="1.4"/><rect x="0.8" y="8.2" width="8.8" height="6.6" rx="1" fill="#f8d868" stroke="#b8880c"/><rect x="2.2" y="9.6" width="6" height="3.8" fill="#fbeaa0"/><rect x="4.6" y="10.6" width="1.2" height="2" fill="#7a5808"/></svg><div class="chk" style="left:667px;top:402px;width:23px;height:21px"></div><svg style="left:671px;top:405px" width="18" height="17" viewBox="0 0 18 17" ><rect x="5.7" y="2.2" width="10.6" height="8.2" rx=".8" fill="#f6f9fe" stroke="#3a78d0" stroke-width="1.3"/><path d="M8 5H14M8 7.4H12.5" stroke="#4a5a9c" stroke-width="1.1"/><rect x="1.8" y="8" width="6.2" height="5.4" rx=".6" fill="#e8f0fc" stroke="#3a78d0" stroke-width="1.3"/><path d="M5 13.5V15M2.5 15.7H7.5" stroke="#3a78d0" stroke-width="1.3"/></svg><div class="chk" style="left:691px;top:402px;width:23px;height:21px"></div><svg style="left:695px;top:405px" width="18" height="17" viewBox="0 0 18 17" ><rect x="5.7" y="2.2" width="10.6" height="8.2" rx=".8" fill="#f6f9fe" stroke="#3a78d0" stroke-width="1.3"/><path d="M8 4.2L11.6 8.4M11.6 4.2L8 8.4" stroke="#d02030" stroke-width="1.6"/><path d="M13 5H14.8M13 7.4H14.8" stroke="#4a5a9c" stroke-width="1.1"/><rect x="1.8" y="8" width="6.2" height="5.4" rx=".6" fill="#e8f0fc" stroke="#3a78d0" stroke-width="1.3"/><path d="M5 13.5V15M2.5 15.7H7.5" stroke="#3a78d0" stroke-width="1.3"/></svg><div class="sep" style="left:718px;top:404px;height:18px"></div><svg style="left:729px;top:405px" width="16" height="15" viewBox="0 0 16 15" ><rect x="0.5" y="5.5" width="11" height="8.5" fill="#fff" stroke="#4a6ab4"/><rect x="0.5" y="5.5" width="11" height="2.2" fill="#86a6e0" stroke="#4a6ab4"/><path d="M6.5 9.5L10 6" stroke="#505050" stroke-width="1.2"/><path d="M9 3L12.5 1L15 3.5L13 7L11.5 7.2L8.8 4.5Z" fill="#3aa050" stroke="#1f7030" stroke-width=".8"/></svg><svg style="left:753px;top:406px" width="14" height="15" viewBox="0 0 14 15" ><rect x="0.8" y="0.8" width="11.4" height="9.4" rx="1" fill="#e2e0da" stroke="#8c8a86" stroke-width="1.6"/><path d="M3 3.8H10M3 6.5H8" stroke="#9c9a96" stroke-width="1.2"/><path d="M5 10.5H8V12.5H5Z" fill="#9c9a96"/><path d="M2 13.2H11" stroke="#8c8a86" stroke-width="1.6"/></svg><svg style="left:775px;top:412px" width="6" height="4" viewBox="0 0 6 4" shape-rendering="crispEdges"><path d="M1 1H6V2H1ZM2 2H5V3H2ZM3 3H4V4H3Z" fill="#fff"/><path d="M0 0H5V1H0ZM1 1H4V2H1ZM2 2H3V3H2Z" fill="#808080"/></svg><svg style="left:789px;top:405px" width="17" height="17" viewBox="0 0 17 17" ><defs><linearGradient id="nw789" x1="0" y1="0" x2="1" y2="1"><stop offset="0" stop-color="#cfe4fb"/><stop offset="1" stop-color="#fff"/></linearGradient></defs><rect x="1.5" y="5.5" width="13" height="10" fill="url(#nw789)" stroke="#b8a468"/><path d="M1 5.5H11M1 6.5H11" stroke="#4a7acc"/><path d="M13 8V9Q13 14 7.5 14.6" fill="none" stroke="#ecc850" stroke-width="1.2"/><path d="M13 1.4l1.2 2.4l2.4 1.2l-2.4 1.2l-1.2 2.4l-1.2-2.4l-2.4-1.2l2.4-1.2z" fill="#fffbe0" stroke="#c8961e" stroke-width="1.1" stroke-linejoin="round"/><path d="M13 3v4M11 5h4" stroke="#fff" stroke-width=".8"/></svg><svg style="left:812px;top:412px" width="5" height="3" viewBox="0 0 5 3" shape-rendering="crispEdges"><path d="M0 0H5V1H0ZM1 1H4V2H1ZM2 2H3V3H2Z" fill="#000"/></svg><div style="left:826px;top:406px;width:10px;height:4px;background:#fff;border:1px solid #404040"></div><div style="left:844px;top:406px;width:10px;height:10px;background:#fff;border:1px solid #404040"><i style="left:0;top:1px;width:8px;height:1px;background:#404040"></i></div><span class="t" style="left:236.5px;top:428px;letter-spacing:-0.377px">&lt;terminated&gt;</span><span class="t" style="left:306px;top:428px;letter-spacing:-0.261px">UneClasse</span><span class="t" style="left:359px;top:428px;letter-spacing:-0.07px">[Java Application]</span><span class="t" style="left:448.3px;top:428px;letter-spacing:-0.142px">C:\Program Files\</span><span class="t" style="left:530px;top:428px;letter-spacing:0.204px">Java\jdk1.6\bin\javaw.exe</span><span class="t" style="left:664.8px;top:428px;letter-spacing:-0.086px">(30 oct. 07 16:56:20)</span><div style="left:236px;top:441px;width:622px;height:104px;background:#fff;border-top:1px solid #808080"></div><div class="mono" style="left:236px;top:444px">Bonjour à tous !</div><div class="track" style="left:842px;top:457px;width:16px;height:56px"></div><div class="sbtn" style="left:842px;top:441px"><svg style="left:-1px;top:-1px" width="16" height="16" viewBox="0 0 16 16" shape-rendering="crispEdges"><path d="M8 7h1v1h-1ZM7 8h3v1h-3ZM6 9h5v1h-5ZM5 10h7v1h-7Z" fill="#fff"/><path d="M7 6h1v1h-1ZM6 7h3v1h-3ZM5 8h5v1h-5ZM4 9h7v1h-7Z" fill="#808080"/></svg></div><div class="sbtn" style="left:842px;top:513px"><svg style="left:-1px;top:-1px" width="16" height="16" viewBox="0 0 16 16" shape-rendering="crispEdges"><path d="M5 7h7v1h-7ZM6 8h5v1h-5ZM7 9h3v1h-3ZM8 10h1v1h-1Z" fill="#fff"/><path d="M4 6h7v1h-7ZM5 7h5v1h-5ZM6 8h3v1h-3ZM7 9h1v1h-1Z" fill="#808080"/></svg></div><div class="track" style="left:252px;top:529px;width:574px;height:16px"></div><div class="sbtn" style="left:236px;top:529px"><svg style="left:-1px;top:-1px" width="16" height="16" viewBox="0 0 16 16" shape-rendering="crispEdges"><path d="M6 8h1v1h-1ZM7 7h1v3h-1ZM8 6h1v5h-1ZM9 5h1v7h-1Z" fill="#fff"/><path d="M5 7h1v1h-1ZM6 6h1v3h-1ZM7 5h1v5h-1ZM8 4h1v7h-1Z" fill="#808080"/></svg></div><div class="sbtn" style="left:826px;top:529px"><svg style="left:-1px;top:-1px" width="16" height="16" viewBox="0 0 16 16" shape-rendering="crispEdges"><path d="M7 5h1v7h-1ZM8 6h1v5h-1ZM9 7h1v3h-1ZM10 8h1v1h-1Z" fill="#fff"/><path d="M6 4h1v7h-1ZM7 5h1v5h-1ZM8 6h1v3h-1ZM9 7h1v1h-1Z" fill="#808080"/></svg></div><div style="left:842px;top:529px;width:16px;height:16px;background:#d4d0c8"></div>
<!-- Status bar -->
<div class="grip" style="left:11px;top:552px;height:18px"></div><svg style="left:26px;top:555px" width="14" height="13" viewBox="0 0 14 13" ><rect x="0.5" y="1.5" width="5" height="11" fill="#fff" stroke="#8a94b4"/><rect x="0.5" y="1.5" width="5" height="2.4" fill="#6f96dc" stroke="#3a62b4"/><path d="M10 0.5l1.2 1.8l1.8 1.2l-1.8 1.2l-1.2 1.8l-1.2-1.8l-1.8-1.2l1.8-1.2z" fill="#fff6b0" stroke="#c8961e" stroke-width=".9"/></svg><div class="sep" style="left:211px;top:550px;height:22px"></div><span class="t" style="left:219px;top:555px;letter-spacing:-0.25px">Writable</span><div class="sep" style="left:299px;top:550px;height:22px"></div><span class="t" style="left:307px;top:555px;letter-spacing:-0.15px">Smart Insert</span><div class="sep" style="left:383px;top:550px;height:22px"></div><span class="t" style="left:391px;top:555px">4 : 8</span><div class="grip" style="left:462px;top:552px;height:18px"></div><div class="grip" style="left:722px;top:552px;height:18px"></div><svg style="left:731px;top:549px" width="131" height="25" viewBox="0 0 131 25" ><path d="M1.5 24V6Q1.5 1.5 6 1.5H125Q129.5 1.5 129.5 6V24" fill="none" stroke="#808080"/></svg><svg style="left:740px;top:556px" width="17" height="12" viewBox="0 0 17 12" ><path d="M1 4.5L5 1.5H10L7 4.5L9 6.5H5Z" fill="#fff" stroke="#8a8a8a" stroke-width=".8" stroke-linejoin="round"/><path d="M7.5 10.5V5.5Q7.5 4.5 8.5 4.5H13Q15.5 4.5 15.5 7V10.5Z" fill="#e8b64a" stroke="#a8781c"/><path d="M8 7.5H15" stroke="#c89028"/></svg><div class="sep" style="left:762px;top:552px;height:19px"></div><svg style="left:771px;top:553px" width="15" height="18" viewBox="0 0 15 18" ><defs><radialGradient id="gl" cx="40%" cy="35%" r="65%"><stop offset="0" stop-color="#fff"/><stop offset=".6" stop-color="#b8d4f0"/><stop offset="1" stop-color="#7aa4d8"/></radialGradient></defs><path d="M9.5 1.5Q14 6.5 10.5 13" fill="none" stroke="#c89828" stroke-width="1.6"/><circle cx="6.5" cy="7.5" r="5.6" fill="url(#gl)" stroke="#8ab0dc" stroke-width=".8"/><path d="M6.5 13.5V15.5M3 16.3H10.5" stroke="#c89828" stroke-width="1.6"/><circle cx="9.3" cy="1.5" r="1" fill="#c89828"/></svg><svg style="left:794px;top:556px" width="16" height="12" viewBox="0 0 16 12" ><rect x="0.5" y="0.5" width="14" height="10.5" fill="#f4f8fc" stroke="#6a748c"/><path d="M2 2.5H12" stroke="#a8b4d0" stroke-dasharray="1 1"/><path d="M2.5 5.5L5 8.5L9.5 3" fill="none" stroke="#1a8a2a" stroke-width="1.8"/><path d="M9 5L14 10.5" stroke="#5a6a8a" stroke-width="1.6"/><circle cx="14.3" cy="10.8" r="1" fill="#2a9a3a"/></svg><svg style="left:816px;top:554px" width="18" height="15" viewBox="0 0 18 15" ><circle cx="5" cy="5" r="4.2" fill="#3a7ae0" stroke="#1a50b0" stroke-width=".8"/><path d="M2 3.5L8 6M3 7.5L7.5 2" stroke="#9cc0f8" stroke-width=".8"/><path d="M12 0.8L16.2 5L12 9.2L9.5 5Z" fill="#6cc83a" stroke="#3a9018" stroke-width=".8"/><path d="M12 1V9" stroke="#c8f0a8"/><circle cx="8.5" cy="10.5" r="3.8" fill="#ffa818" stroke="#e08808" stroke-width=".8"/><path d="M6 9.5H11" stroke="#ffe0a0" stroke-width="1.2"/></svg><svg style="left:838px;top:553px" width="18" height="18" viewBox="0 0 18 18" ><path d="M9 1.5L11.2 6.8L16.5 9L11.2 11.2L9 16.5L6.8 11.2L1.5 9L6.8 6.8Z" fill="#fbf0cc" stroke="#d8a83a" stroke-width="1.3" stroke-linejoin="round"/><path d="M9 3.5V14.5M3.5 9H14.5" stroke="#fff" stroke-width="1"/></svg>
</body></html>
